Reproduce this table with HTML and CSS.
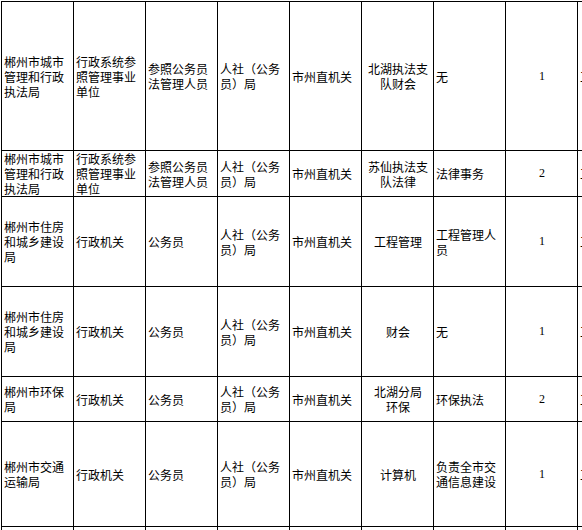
FILE: index.html
```html
<!DOCTYPE html>
<html lang="zh-CN">
<head>
<meta charset="utf-8">
<title>职位表</title>
<link rel="stylesheet" href="styles.css">
</head>
<body>
<table class="grid">
  <tr class="r1">
    <td class="l">郴州市城市管理和行政执法局</td>
    <td class="l">行政系统参照管理事业单位</td>
    <td class="l">参照公务员法管理人员</td>
    <td class="l">人社（公务员）局</td>
    <td class="l">市州直机关</td>
    <td class="c">北湖执法支队财会</td>
    <td class="l">无</td>
    <td class="n">1</td>
    <td class="l">工</td>
  </tr>
  <tr class="r2">
    <td class="l">郴州市城市管理和行政执法局</td>
    <td class="l">行政系统参照管理事业单位</td>
    <td class="l">参照公务员法管理人员</td>
    <td class="l">人社（公务员）局</td>
    <td class="l">市州直机关</td>
    <td class="c">苏仙执法支队法律</td>
    <td class="l">法律事务</td>
    <td class="n">2</td>
    <td class="l">工</td>
  </tr>
  <tr class="r3">
    <td class="l">郴州市住房和城乡建设局</td>
    <td class="l">行政机关</td>
    <td class="l">公务员</td>
    <td class="l">人社（公务员）局</td>
    <td class="l">市州直机关</td>
    <td class="c">工程管理</td>
    <td class="l">工程管理人员</td>
    <td class="n">1</td>
    <td class="l">工</td>
  </tr>
  <tr class="r4">
    <td class="l">郴州市住房和城乡建设局</td>
    <td class="l">行政机关</td>
    <td class="l">公务员</td>
    <td class="l">人社（公务员）局</td>
    <td class="l">市州直机关</td>
    <td class="c">财会</td>
    <td class="l">无</td>
    <td class="n">1</td>
    <td class="l">工</td>
  </tr>
  <tr class="r5">
    <td class="l">郴州市环保局</td>
    <td class="l">行政机关</td>
    <td class="l">公务员</td>
    <td class="l">人社（公务员）局</td>
    <td class="l">市州直机关</td>
    <td class="c">北湖分局<br>环保</td>
    <td class="l">环保执法</td>
    <td class="n">2</td>
    <td class="l">工</td>
  </tr>
  <tr class="r6">
    <td class="l">郴州市交通运输局</td>
    <td class="l">行政机关</td>
    <td class="l">公务员</td>
    <td class="l">人社（公务员）局</td>
    <td class="l">市州直机关</td>
    <td class="c">计算机</td>
    <td class="l">负责全市交通信息建设</td>
    <td class="n">1</td>
    <td class="l">工</td>
  </tr>
  <tr class="r7">
    <td class="l"></td>
    <td class="l"></td>
    <td class="l"></td>
    <td class="l"></td>
    <td class="l"></td>
    <td class="c"></td>
    <td class="l"></td>
    <td class="n"></td>
    <td class="l"></td>
  </tr>
</table>
</body>
</html>
```

FILE: styles.css
```css
html, body {
  background: #ffffff;
}
body {
  margin: 1px 0 0 1px;
  overflow: hidden;
  font-family: "Noto Sans CJK SC", "Liberation Sans", sans-serif;
  font-size: 12px;
  line-height: 15px;
  color: #000000;
}
.grid {
  border-collapse: separate;
  border-spacing: 0;
  table-layout: fixed;
  width: 649px;
  border-top: 1px solid #000000;
  border-left: 1px solid #000000;
}
.grid td {
  box-sizing: border-box;
  width: 72px;
  padding: 0 1px 0 2px;
  border-right: 1px solid #000000;
  border-bottom: 1px solid #000000;
  vertical-align: middle;
  overflow: hidden;
  word-break: break-all;
}
.grid td.l { text-align: left; }
.grid td.c { text-align: center; }
.grid td.n {
  text-align: center;
  font-family: "Liberation Serif", serif;
}
.r1 td { height: 149px; }
.r2 td { height: 46px; }
.r3 td { height: 90px; }
.r4 td { height: 90px; }
.r5 td { height: 45px; }
.r6 td { height: 105px; }
.r7 td { height: 40px; }
```
